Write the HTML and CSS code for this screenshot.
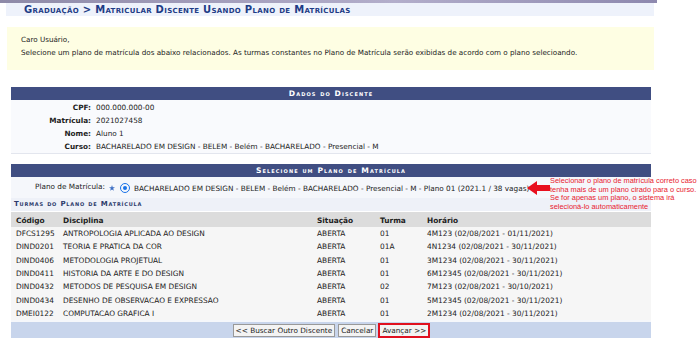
FILE: index.html
```html
<!DOCTYPE html>
<html lang="pt-BR">
<head>
  <meta charset="UTF-8">
  <title>Matricular Discente Usando Plano de Matrículas</title>
  <link rel="stylesheet" href="styles.css">
</head>
<body>

  <div class="topo"></div>
  <h2 class="titulo">Graduação &gt; Matricular Discente Usando Plano de Matrículas</h2>

  <div class="descricao">
    <p>Caro Usuário,</p>
    <p>Selecione um plano de matrícula dos abaixo relacionados. As turmas constantes no Plano de Matrícula serão exibidas de acordo com o plano selecioando.</p>
  </div>

  <table class="visualizacao">
    <caption>Dados do Discente</caption>
    <tbody>
      <tr><th>CPF:</th><td>000.000.000-00</td></tr>
      <tr><th>Matrícula:</th><td>2021027458</td></tr>
      <tr><th>Nome:</th><td>Aluno 1</td></tr>
      <tr><th>Curso:</th><td>BACHARELADO EM DESIGN - BELEM - Belém - BACHARELADO - Presencial - M</td></tr>
    </tbody>
  </table>

  <div class="formulario">
    <div class="caption">Selecione um Plano de Matrícula</div>
    <div class="plano">
      <span class="rotulo">Plano de Matrícula:</span>
      <svg class="obrigatorio" width="6" height="6" viewBox="0 0 10 10"><path d="M5 0 L6.2 3.6 L10 3.7 L7 6 L8.1 9.6 L5 7.5 L1.9 9.6 L3 6 L0 3.7 L3.8 3.6 Z" fill="#3d6fc4"/></svg>
      <span class="radio"></span>
      <span>BACHARELADO EM DESIGN - BELEM - Belém - BACHARELADO - Presencial - M - Plano 01 (2021.1 / 38 vagas)</span>
    </div>
    <div class="subformulario">Turmas do Plano de Matrícula</div>
    <table class="turmas">
      <thead>
        <tr><th class="c-cod">Código</th><th class="c-dis">Disciplina</th><th class="c-sit">Situação</th><th class="c-tur">Turma</th><th>Horário</th></tr>
      </thead>
      <tbody>
        <tr><td>DFCS1295</td><td>ANTROPOLOGIA APLICADA AO DESIGN</td><td>ABERTA</td><td>01</td><td>4M123 (02/08/2021 - 01/11/2021)</td></tr>
        <tr><td>DIND0201</td><td>TEORIA E PRATICA DA COR</td><td>ABERTA</td><td>01A</td><td>4N1234 (02/08/2021 - 30/11/2021)</td></tr>
        <tr><td>DIND0406</td><td>METODOLOGIA PROJETUAL</td><td>ABERTA</td><td>01</td><td>3M1234 (02/08/2021 - 30/11/2021)</td></tr>
        <tr><td>DIND0411</td><td>HISTORIA DA ARTE E DO DESIGN</td><td>ABERTA</td><td>01</td><td>6M12345 (02/08/2021 - 30/11/2021)</td></tr>
        <tr><td>DIND0432</td><td>METODOS DE PESQUISA EM DESIGN</td><td>ABERTA</td><td>02</td><td>7M123 (02/08/2021 - 30/10/2021)</td></tr>
        <tr><td>DIND0434</td><td>DESENHO DE OBSERVACAO E EXPRESSAO</td><td>ABERTA</td><td>01</td><td>5M12345 (02/08/2021 - 30/11/2021)</td></tr>
        <tr><td>DMEI0122</td><td>COMPUTACAO GRAFICA I</td><td>ABERTA</td><td>01</td><td>2M1234 (02/08/2021 - 30/11/2021)</td></tr>
      </tbody>
    </table>
    <div class="botoes">
      <button type="button">&lt;&lt; Buscar Outro Discente</button>
      <button type="button">Cancelar</button>
      <button type="button" class="destaque">Avançar &gt;&gt;</button>
    </div>
  </div>

  <!-- anotação do tutorial -->
  <svg class="seta" width="23" height="14" viewBox="0 0 23 14"><path d="M0 7 L10 0 L10 4 L23 4 L23 10 L10 10 L10 14 Z" fill="#e8101e"/></svg>
  <div class="nota">Selecionar o plano de matrícula correto caso<br>tenha mais de um plano cirado para o curso.<br>Se for apenas um plano, o sistema irá<br>selecioná-lo automaticamente</div>

</body>
</html>
```

FILE: styles.css
```css
body {
  margin: 0;
  font-family: "DejaVu Sans", Verdana, sans-serif;
  font-size: 7.3px;
  color: #222;
  background: #fff;
  position: relative;
  width: 700px;
  height: 349px;
  overflow: hidden;
}
.topo {
  height: 3px;
  width: 657px;
  background: linear-gradient(to right, #8e8aa8, #b3aecb 60%, #8d88ae);
}
.titulo {
  margin: 0 0 11px 6px;
  width: 648px;
  height: 13px;
  line-height: 13px;
  background: #eef2fb;
  color: #1e3c86;
  font-size: 10px;
  font-variant: small-caps;
  font-weight: bold;
  padding-left: 18px;
  box-sizing: border-box;
  letter-spacing: 0.3px;
}
.descricao {
  margin: 0 0 17px 7px;
  width: 647px;
  height: 43px;
  background: #fefee3;
  padding: 9px 14px 0;
  box-sizing: border-box;
  font-size: 7.2px;
}
.descricao p {
  margin: 0 0 5px;
  line-height: 8px;
}
.visualizacao {
  margin: 0 0 10px 11px;
  width: 640px;
  border-collapse: collapse;
  background: #f9fafd;
  border-bottom: 1px solid #e3e6ee;
}
caption, .caption {
  background: #404e82;
  color: #fff;
  font-weight: bold;
  font-variant: small-caps;
  letter-spacing: 1.1px;
  font-size: 7.6px;
  height: 13px;
  line-height: 14px;
  text-align: center;
}
.visualizacao th {
  width: 80px;
  text-align: right;
  padding: 0 3px 0 0;
  height: 13px;
  font-weight: bold;
}
.visualizacao td {
  padding: 0 0 0 2px;
}
.visualizacao tbody tr:first-child th,
.visualizacao tbody tr:first-child td {
  padding-top: 1px;
}
.formulario {
  margin-left: 11px;
  width: 640px;
  background: #f5f7fb;
}
.plano {
  height: 21px;
  display: flex;
  align-items: center;
  padding-top: 1px;
  box-sizing: border-box;
}
.plano .rotulo {
  width: 94px;
  text-align: right;
  align-self: flex-start;
  margin-top: 4px;
}
.obrigatorio {
  margin: 0 5px 0 4px;
}
.radio {
  width: 8px;
  height: 8px;
  border: 1px solid #1a73e8;
  border-radius: 50%;
  margin-right: 4px;
  position: relative;
}
.radio::after {
  content: "";
  position: absolute;
  left: 2px;
  top: 2px;
  width: 4px;
  height: 4px;
  border-radius: 50%;
  background: #1a73e8;
}
.subformulario {
  height: 13px;
  line-height: 12px;
  background: #eef1f8;
  color: #2c3a6b;
  font-weight: bold;
  font-variant: small-caps;
  letter-spacing: 0.8px;
  font-size: 7px;
  padding-left: 3px;
  border-bottom: 1px solid #fff;
}
.turmas {
  width: 640px;
  border-collapse: collapse;
  table-layout: fixed;
  background: #f6f6f6;
  font-size: 7.4px;
}
.turmas th,
.turmas td {
  box-sizing: border-box;
  padding: 0 0 0 5px;
  white-space: nowrap;
}
.turmas thead th {
  background: #dcdcdc;
  text-align: left;
  height: 15px;
  padding-top: 1px;
}
.turmas td {
  height: 13.3px;
}
.c-cod { width: 47px; }
.c-dis { width: 254px; }
.c-sit { width: 63px; }
.c-tur { width: 47px; }
.botoes {
  margin-top: 2px;
  height: 16px;
  background: #c8d5ec;
  display: flex;
  justify-content: center;
  align-items: center;
  gap: 3px;
}
.botoes button {
  font-family: inherit;
  font-size: 7.3px;
  height: 13px;
  padding: 0 2px;
  background: #f3f3f3;
  border: 1px solid #999;
  color: #222;
}
.botoes .destaque {
  outline: 1.5px solid #e01020;
  outline-offset: 0;
  border-color: #e01020;
}
.seta {
  position: absolute;
  left: 527px;
  top: 181px;
}
.nota {
  position: absolute;
  left: 550px;
  top: 177px;
  color: #e8202e;
  font-family: "Liberation Sans", Arial, sans-serif;
  font-size: 7.4px;
  line-height: 8.7px;
  white-space: nowrap;
}
```
